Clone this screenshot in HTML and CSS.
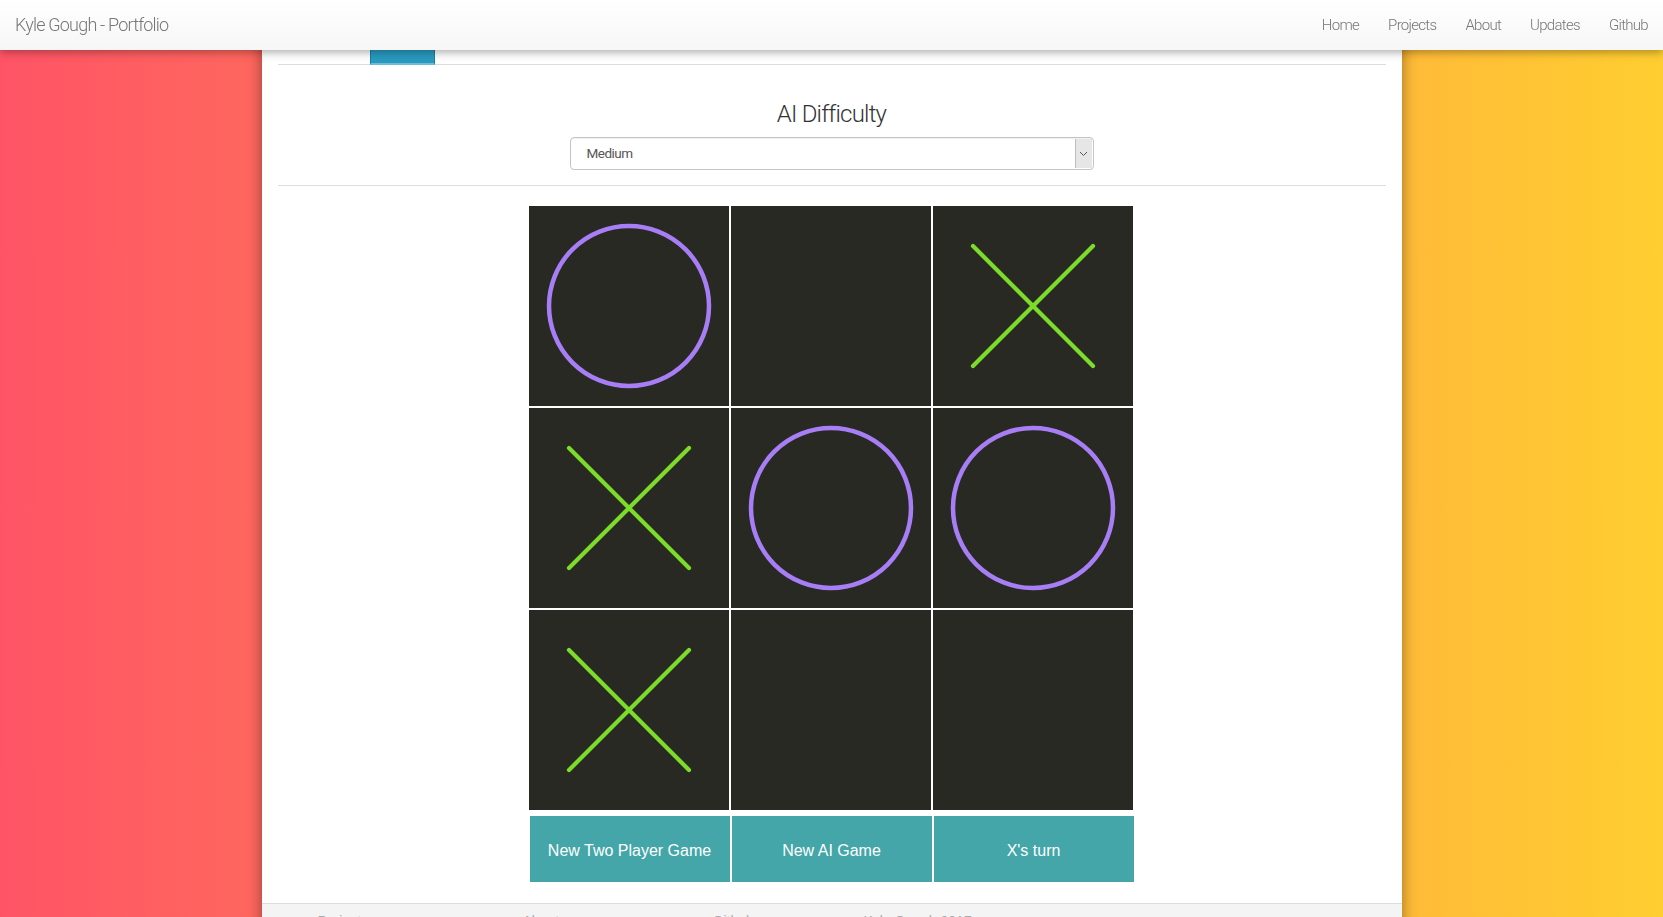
FILE: index.html
```html
<!DOCTYPE html>
<html lang="en">
<head>
<meta charset="utf-8">
<title>Kyle Gough - Portfolio</title>
<link rel="stylesheet" href="styles.css">
</head>
<body>
<header class="navbar">
  <a class="brand" href="#">Kyle Gough - Portfolio</a>
  <nav class="nav-links">
    <a href="#">Home</a>
    <a href="#">Projects</a>
    <a href="#">About</a>
    <a href="#">Updates</a>
    <a href="#">Github</a>
  </nav>
</header>
<main class="page">
  <div class="card">
    <div class="card-body">
      <div class="tabs">
        <span class="tab"></span>
        <span class="tab tab-active"></span>
      </div>
      <section class="difficulty">
        <h2 class="difficulty-title">AI Difficulty</h2>
        <div class="select">
          <span class="select-value">Medium</span>
          <span class="select-arrow">
            <svg width="9" height="6" viewBox="0 0 9 6"><path d="M1 1 L4.5 4.5 L8 1" fill="none" stroke="#555" stroke-width="1"/></svg>
          </span>
        </div>
      </section>
      <hr class="divider">
      <div class="board">
        <div class="cell"><svg viewBox="0 0 200 200"><circle cx="100" cy="100" r="80" class="o-mark"/></svg></div>
        <div class="cell"></div>
        <div class="cell"><svg viewBox="0 0 200 200"><path d="M40 40 L160 160 M160 40 L40 160" class="x-mark"/></svg></div>
        <div class="cell"><svg viewBox="0 0 200 200"><path d="M40 40 L160 160 M160 40 L40 160" class="x-mark"/></svg></div>
        <div class="cell"><svg viewBox="0 0 200 200"><circle cx="100" cy="100" r="80" class="o-mark"/></svg></div>
        <div class="cell"><svg viewBox="0 0 200 200"><circle cx="100" cy="100" r="80" class="o-mark"/></svg></div>
        <div class="cell"><svg viewBox="0 0 200 200"><path d="M40 40 L160 160 M160 40 L40 160" class="x-mark"/></svg></div>
        <div class="cell"></div>
        <div class="cell"></div>
      </div>
      <div class="controls">
        <button class="ctrl">New Two Player Game</button>
        <button class="ctrl">New AI Game</button>
        <div class="ctrl status">X's turn</div>
      </div>
    </div>
    <footer class="footer">
      <span>Projects</span>
      <span>About</span>
      <span>Github</span>
      <span>Kyle Gough 2017</span>
    </footer>
  </div>
</main>
</body>
</html>
```
FILE: styles.css
```css
html, body {
  margin: 0;
  padding: 0;
}
body {
  font-family: Roboto, "Liberation Sans", Arial, sans-serif;
  font-weight: 300;
  background: linear-gradient(90deg, #ff5466 0%, #ffce30 100%);
  min-height: 100vh;
  overflow: hidden;
}
.navbar {
  position: fixed;
  top: 0;
  left: 0;
  right: 0;
  height: 50px;
  display: flex;
  align-items: center;
  justify-content: space-between;
  background: linear-gradient(#ffffff, #f6f6f6);
  box-shadow: 0 2px 9px rgba(0, 0, 0, 0.35);
  z-index: 10;
}
.brand {
  padding-left: 15px;
  font-size: 18px;
  letter-spacing: -0.8px;
  color: #777;
  text-decoration: none;
  line-height: 50px;
}
.nav-links {
  display: flex;
  padding-right: 1px;
}
.nav-links a {
  padding: 0 14px 0 15px;
  font-size: 15px;
  letter-spacing: -0.7px;
  line-height: 50px;
  color: #777;
  text-decoration: none;
}
.page {
  display: flex;
  justify-content: center;
}
.card {
  width: 1140px;
  background: #fff;
  box-shadow: 0 0 14px rgba(0, 0, 0, 0.4);
  min-height: 1000px;
}
.card-body {
  padding: 0 16px;
}
.tabs {
  height: 65px;
  box-sizing: border-box;
  display: flex;
  align-items: flex-end;
  border-bottom: 1px solid #ddd;
}
.tab {
  width: 92px;
  height: 40px;
}
.tab-active {
  width: 65px;
  box-sizing: border-box;
  background: #2a9bc0;
  border: 1px solid #1b7d9e;
  border-bottom: 2px solid #6dbcd8;
  margin-bottom: -1px;
  height: 41px;
}
.difficulty {
  padding-top: 35px;
  display: flex;
  flex-direction: column;
  align-items: center;
}
.difficulty-title {
  margin: 0;
  font-weight: 300;
  font-size: 24px;
  letter-spacing: -0.8px;
  line-height: 28px;
  color: #333;
}
.select {
  margin-top: 9px;
  width: 524px;
  height: 33px;
  box-sizing: border-box;
  border: 1px solid #c4c4c4;
  border-radius: 4px;
  display: flex;
  align-items: stretch;
  box-shadow: inset 0 1px 1px rgba(0, 0, 0, 0.06);
  background: #fff;
}
.select-value {
  flex: 1;
  padding-left: 16px;
  font-size: 13.5px;
  font-weight: 400;
  letter-spacing: -0.5px;
  line-height: 31px;
  color: #555;
}
.select-arrow {
  width: 16px;
  margin: 1px 1px 1px 0;
  background: #e6e6e6;
  border-left: 1px solid #bdbdbd;
  display: flex;
  align-items: center;
  justify-content: center;
}
.divider {
  margin: 15px 0 0;
  border: 0;
  border-top: 1px solid #ddd;
  height: 0;
}
.board {
  margin: 20px 0 0 251px;
  width: 604px;
  display: grid;
  grid-template-columns: repeat(3, 200px);
  grid-auto-rows: 200px;
  gap: 2px;
}
.cell {
  background: #282923;
}
.cell svg {
  display: block;
  width: 200px;
  height: 200px;
}
.o-mark {
  fill: none;
  stroke: #a87ef6;
  stroke-width: 4.5;
}
.x-mark {
  fill: none;
  stroke: #7ddc2b;
  stroke-width: 4.2;
  stroke-linecap: round;
}
.controls {
  margin: 6px 0 0 251px;
  width: 605px;
  display: grid;
  grid-template-columns: repeat(3, 200px);
  gap: 2px;
  padding-left: 1px;
  box-sizing: border-box;
}
.ctrl {
  height: 66px;
  border: 0;
  margin: 0;
  padding: 3px 0 0;
  box-sizing: border-box;
  background: #44a6a8;
  color: #fff;
  font-family: "Liberation Sans", Arial, sans-serif;
  font-weight: 400;
  font-size: 16px;
  display: flex;
  align-items: center;
  justify-content: center;
}
.footer {
  margin-top: 21px;
  border-top: 1px solid #ddd;
  background: #f4f4f4;
  display: grid;
  grid-template-columns: 205px 190px 151px auto;
  padding: 9px 0 30px 56px;
  font-family: "Liberation Sans", Arial, sans-serif;
  font-size: 14px;
  color: #aaa;
}
```
